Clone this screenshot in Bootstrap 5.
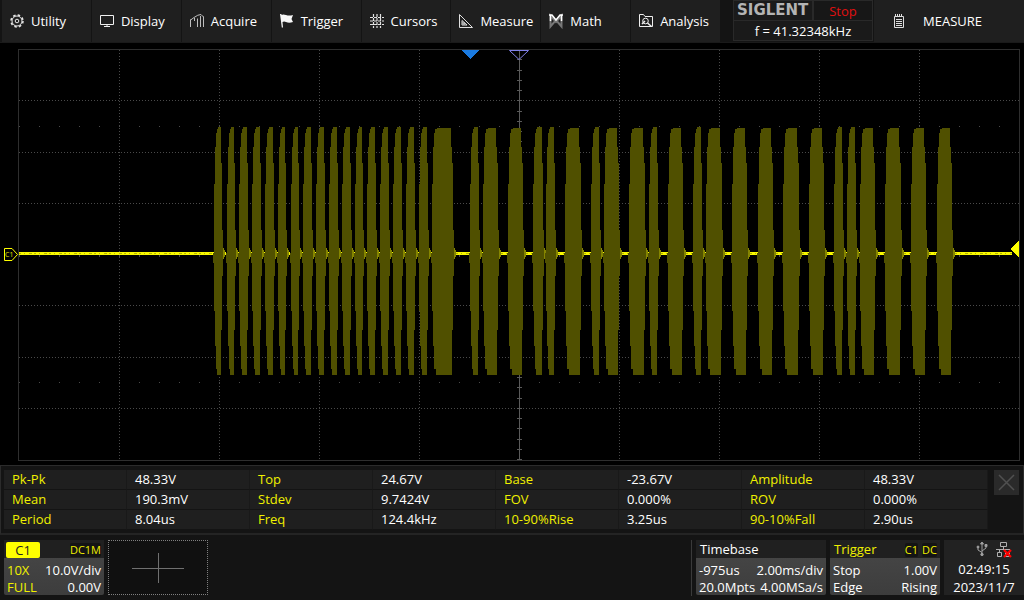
<!DOCTYPE html>
<html lang="en" data-bs-theme="dark">
<head>
<meta charset="utf-8">
<meta name="viewport" content="width=device-width, initial-scale=1">
<title>Oscilloscope</title>
<link href="https://cdn.jsdelivr.net/npm/bootstrap@5.3.0/dist/css/bootstrap.min.css" rel="stylesheet">
<style>
  body { background: #141414; color: #fff; font: 13px/18px "Open Sans", "Noto Sans", sans-serif; }
  .topbar { height: 43px; background: #141414; border-bottom: 1px solid #1a1a1a; }
  .menu-bar { min-width: 0; padding-left: 2px; }
  .menu-item { flex: 1 1 0; min-width: 0; background: #1f1f1f; color: #fff; border: 0; border-right: 1px solid #141414; padding: 0 0 0 7px; gap: 6px; font: inherit; white-space: nowrap; }
  .menu-item svg { flex: none; width: 16px; height: 16px; }
  .brand-box { width: 140px; height: 41px; margin-left: 12px; border: 1px solid #292929; background: #1a1a1a; }
  .brand-top { height: 20px; border-bottom: 1px solid #292929; }
  .brand-name { width: 80px; padding-left: 3px; color: #b4b4b4; font: bold 15px/19px "DejaVu Sans", sans-serif; border-right: 2px solid #292929; }
  .run-state { color: #e01010; background: #171717; line-height: 21px; }
  .freq { line-height: 20px; }
  .menu-item.measure-btn { flex: 0 0 150px; margin-left: 1px; padding-left: 17px; gap: 16px; border-right: 0; }
  .yel { color: #f0f000 !important; }
  .results { background: #141414; border: 1px solid #2b2b2b; border-bottom: 2px solid #242424; height: 70px; padding: 4px 4px 0 3px; gap: 6px; }
  .results table { table-layout: fixed; border-collapse: separate; border-spacing: 0; height: 60px; }
  .results th, .results td { background: #1f1f1f; height: 20px; padding: 0 0 0 8px; line-height: 19px; font-weight: 400; border-right: 1px solid #191919; border-bottom: 1px solid #141414; white-space: nowrap; }
  .close-btn { flex: none; width: 25px; height: 25px; background: #2a2a2a; border: 0; }
  .status { background: #141414; height: 65px; padding: 5px 0; gap: 4px; }
  .info-card { background: linear-gradient(#484848, #3d3d3d); border: 0; color: #fff; font: inherit; line-height: 17px; text-align: left; border-radius: 2px; height: 55px; }
  .info-head { height: 18px; background: #202020; padding: 0 3px 0 4px; line-height: 19px; }
  .info-body { padding: 4px 3px 0 3px; }
  .chan { width: 100px; }
  .timebase { width: 130px; }
  .trig { width: 110px; }
  .chan-tag { width: 34px; height: 16px; margin: 2px; background: #ff0; color: #222; text-align: center; border-radius: 2px; line-height: 16px; }
  .tag { background: #141414; border-radius: 2px; font-size: 11px; line-height: 14px; margin-top: 2px; }
  .add-chan { width: 100px; height: 55px; background: #101010; border: 1px dotted #808080; }
  .rule { width: 1px; height: 56px; background: #3a3a3a; }
  .clock { width: 80px; height: 55px; background: #222; line-height: 18px; }
  .ports { height: 20px; }
</style>
</head>
<body>
<div class="d-flex flex-column">
  <header class="topbar d-flex">
    <nav class="menu-bar d-flex flex-grow-1">
      <button class="menu-item d-flex align-items-center"><svg viewBox="0 0 16 16" fill="none" stroke="#e8e8e8"><circle cx="8" cy="8" r="5" stroke-width="1"/><circle cx="8" cy="8" r="6" stroke-width="1.500" stroke-dasharray="2.500 2.210"/><circle cx="8" cy="8" r="1.800"/></svg>Utility</button>
      <button class="menu-item d-flex align-items-center"><svg viewBox="0 0 16 16" fill="none" stroke="#f0f0f0"><path d="M1.500 2.500h13v9h-13zM8 12v1.500M5 13.500h6"/></svg>Display</button>
      <button class="menu-item d-flex align-items-center"><svg viewBox="0 0 16 16" fill="none" stroke="#bdbdbd"><path d="M1.500 14V6.500M1 7.500 5 4.500Q9 1.500 12 1.500L14.500 4M5.500 5v3M8.500 5.500V14M11.500 3v11M14.500 3.500V14"/></svg>Acquire</button>
      <button class="menu-item d-flex align-items-center"><svg viewBox="0 0 16 16" fill="#f8f8f8"><path d="M1 1h1.500v1Q4 1 7 2T14 2L12.500 6l1.500 3Q10 10.500 7 9 5 8 3.500 9L4 14.500H2.800z"/></svg>Trigger</button>
      <button class="menu-item d-flex align-items-center"><svg viewBox="0 0 16 16" stroke="#e0e0e0" stroke-width="1.200"><path d="M4.500 1v14M8 1v14M11.500 1v14" stroke-dasharray="3 1"/><path d="M1 4.500h14M1 8h14M1 11.500h14" stroke-dasharray="3 1"/></svg>Cursors</button>
      <button class="menu-item d-flex align-items-center"><svg viewBox="0 0 16 16" fill="none" stroke="#e0e0e0"><path d="M1.500 1.500 14.500 14.500h-13z"/><path d="M4 7.500v4.500h5zM4 10h3M6 10v2"/></svg>Measure</button>
      <button class="menu-item d-flex align-items-center"><svg viewBox="0 0 16 16" fill="none"><path d="M2.500 13.500v-11L8 9l5.500-6.500v11L8 7z" stroke="#777" stroke-width="2"/><path d="M1 2h3l4 5 4-5h3M2.500 2v6M13.500 2v6" stroke="#fff" stroke-width="1.500"/></svg>Math</button>
      <button class="menu-item d-flex align-items-center"><svg viewBox="0 0 16 16" fill="none" stroke="#eee"><path d="M14.500 12V3.500H7L5.500 1.500h-4v12h13V11"/><circle cx="7.500" cy="8" r="2.800"/><path d="m9.500 10 4 3.500M4 11l3-3" stroke-width="1.500"/></svg>Analysis</button>
    </nav>
    <div class="brand-box">
      <div class="brand-top d-flex"><div class="brand-name">SIGLENT</div><div class="run-state flex-fill text-center">Stop</div></div>
      <div class="freq text-center">f = 41.32348kHz</div>
    </div>
    <button class="menu-item measure-btn d-flex align-items-center"><svg viewBox="0 0 16 16" fill="none" stroke="#ddd"><path d="M3.500 3.500h9v11h-9z"/><path d="M4.500 1v3M6.500 1v3M8.500 1v3M10.500 1v3M5 6.500h6M5 8.500h6M5 10.500h6M5 12.500h6"/></svg>MEASURE</button>
  </header>

  <main>
    <svg id="plot" class="d-block w-100" viewBox="0 43 1024 422" shape-rendering="crispEdges" role="img" aria-label="Channel 1 waveform">
      <rect y="43" width="1024" height="422" fill="#000"/>
      <rect x="18.500" y="49.500" width="1001" height="411" fill="none" stroke="#2e2e2e"/>
      <g id="grid" stroke="#4a4a4a"></g>
      <g id="trace"></g>
      <path d="M461 50h18l-9 9z" fill="#1a7ae0"/>
      <path d="M509.500 50.500h19l-9.500 9z" fill="none" stroke="#8080e8" shape-rendering="auto"/>
      <path d="M1019 241v16l-9-8z" fill="#ff0"/>
      <g shape-rendering="auto"><path d="M4.500 248.500h7.500l5.500 6-5.500 6h-7.500z" fill="#000" stroke="#ff0"/><text x="5" y="257" font-size="7" fill="#e0e000">C1</text></g>
    </svg>
  </main>

  <section class="results d-flex" aria-label="Measurements">
    <table class="w-100">
      <tbody>
        <tr><th class="yel">Pk-Pk</th><td>48.33V</td><th class="yel">Top</th><td>24.67V</td><th class="yel">Base</th><td>-23.67V</td><th class="yel">Amplitude</th><td>48.33V</td></tr>
        <tr><th class="yel">Mean</th><td>190.3mV</td><th class="yel">Stdev</th><td>9.7424V</td><th class="yel">FOV</th><td>0.000%</td><th class="yel">ROV</th><td>0.000%</td></tr>
        <tr><th class="yel">Period</th><td>8.04us</td><th class="yel">Freq</th><td>124.4kHz</td><th class="yel">10-90%Rise</th><td>3.25us</td><th class="yel">90-10%Fall</th><td>2.90us</td></tr>
      </tbody>
    </table>
    <button class="close-btn p-0 d-flex" aria-label="Close"><svg width="25" height="25" fill="none" stroke="#505050" stroke-width="1.500"><path d="m5 5 15 15M20 5 5 20"/></svg></button>
  </section>

  <footer class="status d-flex">
    <button class="info-card chan p-0 ms-1 d-block">
      <div class="info-head d-flex justify-content-between ps-0"><span class="chan-tag">C1</span><span class="tag yel align-self-center">DC1M</span></div>
      <div class="info-body"><div class="d-flex justify-content-between"><span class="yel">10X</span><span>10.0V/div</span></div><div class="d-flex justify-content-between"><span class="yel">FULL</span><span>0.00V</span></div></div>
    </button>
    <button class="add-chan p-0 d-flex align-items-center justify-content-center" aria-label="Add channel"><svg width="52" height="30" stroke="#707070"><path d="M0 15.500h52M26.500 0v30"/></svg></button>
    <div class="rule ms-auto"></div>
    <button class="info-card timebase p-0 d-block">
      <div class="info-head">Timebase</div>
      <div class="info-body"><div class="d-flex justify-content-between"><span>-975us</span><span>2.00ms/div</span></div><div class="d-flex justify-content-between"><span>20.0Mpts</span><span>4.00MSa/s</span></div></div>
    </button>
    <button class="info-card trig p-0 d-block">
      <div class="info-head d-flex"><span class="yel me-auto">Trigger</span><span class="tag yel align-self-center me-1">C1</span><span class="tag yel align-self-center">DC</span></div>
      <div class="info-body"><div class="d-flex justify-content-between"><span>Stop</span><span>1.00V</span></div><div class="d-flex justify-content-between"><span>Edge</span><span>Rising</span></div></div>
    </button>
    <div class="clock text-center">
      <div class="ports d-flex justify-content-end gap-2 pe-2 me-1">
        <svg width="12" height="18" viewBox="0 0 12 16" fill="none" stroke="#a0a0a0"><path d="M6 1v13M6 11.500 2 9V6M6 10l4-3V5"/><path d="m4.500 3 1.500-2 1.500 2zM9 3.500h2v2H9z" fill="#a0a0a0"/><circle cx="2" cy="6" r="1" fill="#a0a0a0"/><circle cx="6" cy="13.500" r="1.200" fill="#a0a0a0"/></svg>
        <svg width="16" height="20" viewBox="0 -2 16 20" fill="none" stroke="#b0b0b0"><path d="M4.500.500h6v4h-6zM7.500 5v3M0 7.500h14M3.500 8v2M1.500 10.500h4v4h-4zM9.500 10.500h4v4h-4z"/><path d="m8 8 7 7M15 8l-7 7" stroke="#f00" stroke-width="2.200"/></svg>
      </div>
      <div>02:49:15</div><div>2023/11/7</div>
    </div>
  </footer>
</div>
<script src="https://cdn.jsdelivr.net/npm/bootstrap@5.3.0/dist/js/bootstrap.bundle.min.js"></script>
<script>
  const NS = 'http://www.w3.org/2000/svg';
  function draw(parent, d, attrs) {
    const p = document.createElementNS(NS, 'path');
    p.setAttribute('d', d);
    for (const k in attrs) p.setAttribute(k, attrs[k]);
    parent.appendChild(p);
  }
  const grid = document.getElementById('grid');
  // division lines
  for (let x = 119; x < 1000; x += 100) {
    if (x !== 519) draw(grid, `M${x}.5 50V460`, { 'stroke-dasharray': '1 2' });
  }
  [100, 152, 203, 305, 357, 408].forEach(y => draw(grid, `M19 ${y}.5H1019`, { 'stroke-dasharray': '1 2' }));
  // minor dots and axis ticks
  [126, 382].forEach(y => draw(grid, `M19 ${y}.5H1019`, { 'stroke-dasharray': '1 19' }));
  draw(grid, 'M19 256H1019', { 'stroke-width': 2, 'stroke-dasharray': '1 19' });
  let ticks = 'M519.5 50V460';
  for (let i = 1; i <= 40; i++) ticks += `M517 ${Math.round(49 + i * 10.25)}.5h5`;
  draw(grid, ticks, { stroke: '#5a5a5a' });

  // bursts: start and end time of each carrier pulse
  const bursts = [[214,222],[227,235],[239,248],[252,261],[265,274],[278,286],[291,299],[303,312],[316,325],[329,338],
    [342,351],[355,363],[367,376],[380,389],[393,402],[406,415],[419,428],[432,453],[470,479],[483,498],[508,523],[533,543],
    [546,555],[565,581],[591,600],[604,619],[629,645],[649,658],[668,683],[693,702],[706,722],[732,747],[758,773],[783,799],
    [809,824],[834,843],[847,856],[860,875],[885,901],[911,926],[937,952]];
  const trace = document.getElementById('trace');
  const base = { stroke: '#f8f800', 'stroke-width': 3 };
  const speckle = { stroke: '#b4b400', 'stroke-dasharray': '2 3 1 4 3 2' };
  let prev = 19;
  bursts.forEach(([s, e]) => {
    if (s - prev > 3) {
      draw(trace, `M${prev} 253.5H${s}`, base);
      draw(trace, `M${prev} 253.5H${s}`, speckle);
    } else {
      draw(trace, `M${prev} 253.5h1`, base);
    }
    prev = e + 3;
    const wide = e - s > 12 ? 1 : 0;
    const shoulder = s + 3 + wide;
    draw(trace, `M${s} 253V184H${s+1}V147H${s+2}V133H${s+3}V129H${shoulder+1}V${127 + wide}H${e-1-wide}V147H${e-1}V163H${e}V230H${e+1}V276H${e}V330H${e-1}V375H${shoulder}V369H${s+2}V346H${s+1}V311H${s}V263H${s-1}V253z`, { fill: '#505000' });
    draw(trace, `M${e+1} 248h1v2h1v2h1v3h-1v2h-1v2h-1z`, { fill: '#858500' });
  });
  draw(trace, `M${prev} 253.5H1012`, base);
  draw(trace, `M${prev} 253.5H1012`, speckle);
</script>
</body>
</html>
